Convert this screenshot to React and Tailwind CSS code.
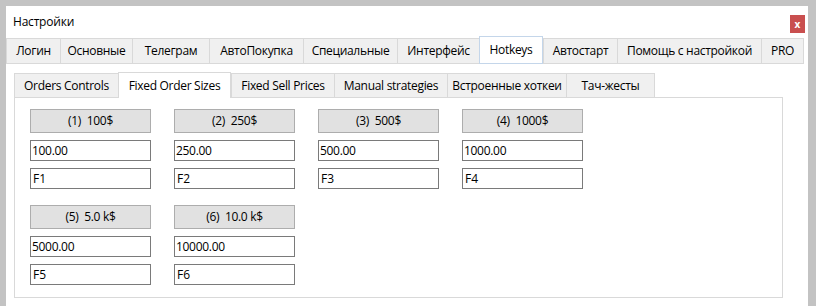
import React from 'react';

const topTabs = [
    { label: 'Логин', w: 'w-[54px]' },
    { label: 'Основные', w: 'w-[72px]' },
    { label: 'Телеграм', w: 'w-[77px]' },
    { label: 'АвтоПокупка', w: 'w-[94px]' },
    { label: 'Специальные', w: 'w-[94px]' },
    { label: 'Интерфейс', w: 'w-[82px]' },
    { label: 'Hotkeys', w: 'w-[64px]', active: true },
    { label: 'Автостарт', w: 'w-[74px]' },
    { label: 'Помощь с настройкой', w: 'w-[144px]' },
    { label: 'PRO', w: 'w-[43px]' },
];

const subTabs = [
    { label: 'Orders Controls', w: 'w-[104px]' },
    { label: 'Fixed Order Sizes', w: 'w-[113px]', active: true },
    { label: 'Fixed Sell Prices', w: 'w-[103px]' },
    { label: 'Manual strategies', w: 'w-[113px]' },
    { label: 'Встроенные хоткеи', w: 'w-[119px]' },
    { label: 'Тач-жесты', w: 'w-[89px]' },
];

const sizes = [
    { title: '(1)  100$', value: '100.00', key: 'F1' },
    { title: '(2)  250$', value: '250.00', key: 'F2' },
    { title: '(3)  500$', value: '500.00', key: 'F3' },
    { title: '(4)  1000$', value: '1000.00', key: 'F4' },
    { title: '(5)  5.0 k$', value: '5000.00', key: 'F5' },
    { title: '(6)  10.0 k$', value: '10000.00', key: 'F6' },
];

const App = () => {
    return (
        <div className="h-[306px] w-[816px] overflow-hidden bg-[#c3c3c3] pt-[6px] pl-[6px] pr-[8px] text-[12px] text-black"
             style={{ fontFamily: '"Open Sans", "Noto Sans", sans-serif' }}>
            <div className="h-full bg-white flex flex-col">
                {/* заголовок окна */}
                <div className="h-[32px] flex items-start justify-between pl-[7px] pr-[3px] shrink-0">
                    <span className="mt-[8px] leading-[16px] tracking-[-0.2px]">Настройки</span>
                    <div className="mt-[9px] w-[15px] h-[18px] bg-[#c94f4f] text-white text-[10px] font-bold flex items-center justify-center leading-none">
                        x
                    </div>
                </div>

                {/* верхние вкладки */}
                <div className="flex items-end h-[26px] shrink-0">
                    {topTabs.map((tab, i) => (
                        <div key={tab.label}
                             className={
                                 tab.active
                                     ? `${tab.w} h-[28px] bg-white border border-[#c4d6ea] flex items-center justify-center tracking-[-0.3px]`
                                     : `${tab.w} h-[26px] bg-[#f0f0f0] border-y border-l border-[#d9d9d9] ${i === topTabs.length - 1 ? 'border-r' : ''} flex items-center justify-center tracking-[-0.3px]`
                             }>
                            {tab.label}
                        </div>
                    ))}
                </div>

                <div className="pl-[8px] pt-[7px] flex flex-col">
                    {/* вложенные вкладки */}
                    <div className="flex items-end h-[26px]">
                        {subTabs.map((tab, i) => (
                            <div key={tab.label}
                                 className={
                                     tab.active
                                         ? `${tab.w} h-[26px] bg-white border-x border-t border-[#d9d9d9] flex items-center justify-center tracking-[-0.3px] relative top-px`
                                         : `${tab.w} h-[24px] bg-[#f0f0f0] border-t border-l border-[#d9d9d9] ${i === subTabs.length - 1 ? 'border-r' : ''} flex items-center justify-center tracking-[-0.3px]`
                                 }>
                                {tab.label}
                            </div>
                        ))}
                    </div>

                    {/* панель */}
                    <div className="w-[769px] h-[201px] border border-[#d9d9d9] pl-[15px] pt-[11px]">
                        <div className="grid grid-cols-[121px_121px_121px_121px] gap-x-[23px] gap-y-[16px]">
                            {sizes.map(item => (
                                <div key={item.key} className="flex flex-col">
                                    <div className="h-[24px] bg-[#e1e1e1] border border-[#adadad] flex items-center justify-center whitespace-pre tracking-[-0.3px]">
                                        {item.title}
                                    </div>
                                    <div className="mt-[7px] h-[21px] border border-[#7a7a7a] bg-white pl-[1px] flex items-center tracking-[-0.3px]">
                                        {item.value}
                                    </div>
                                    <div className="mt-[7px] h-[21px] border border-[#7a7a7a] bg-white pl-[2px] flex items-center">
                                        {item.key}
                                    </div>
                                </div>
                            ))}
                        </div>
                    </div>
                </div>
            </div>
        </div>
    );
};

export default App;
